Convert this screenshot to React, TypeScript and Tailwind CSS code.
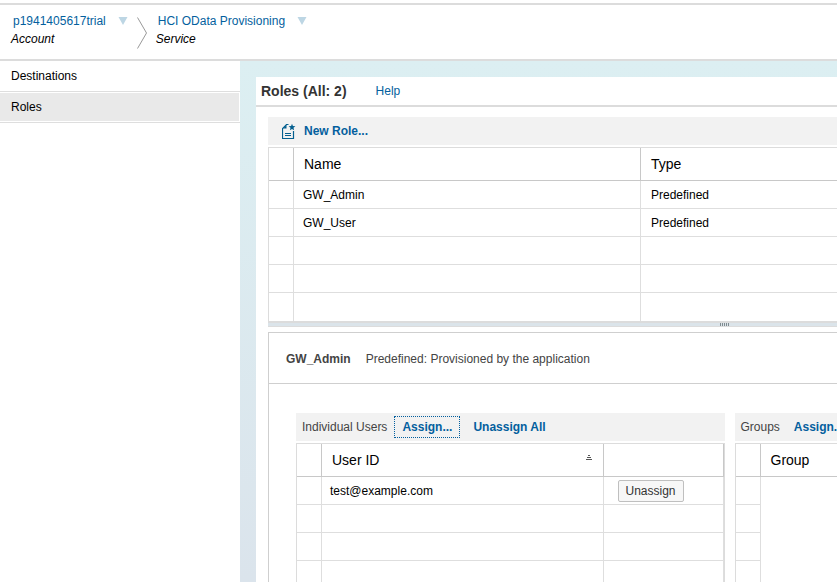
import React from "react";

const mainRoles = [
  { name: "GW_Admin", type: "Predefined" },
  { name: "GW_User", type: "Predefined" },
];

const blankRows = [0, 1, 2, 3, 4];

function DropArrow({ label }: { label: string }) {
  return (
    <button type="button" aria-label={label} className="block">
      <svg width="10" height="8" viewBox="0 0 10 8" fill="#bdd6e4">
        <path d="M0.5 0h9L5 8z" />
      </svg>
    </button>
  );
}

function Crumb({ title, kind }: { title: string; kind: string }) {
  return (
    <div>
      <div className="flex items-center gap-3 pl-0.5">
        <a href="#" className="text-[#045f9e]">{title}</a>
        <DropArrow label={`Switch ${kind}`} />
      </div>
      <div className="text-black italic">{kind}</div>
    </div>
  );
}

function NewRoleIcon() {
  return (
    <svg width="14" height="16" viewBox="0 0 14 16" fill="none" stroke="#045f8f">
      <path d="M6.500 1.500H4.500L0.500 5.500V15.500H11.500V8" strokeWidth="1.200" />
      <path d="M1 5.500L4.500 2V5.500Z" fill="#045f8f" stroke="none" />
      <path d="M3 10.500H9M3 12.500H9" />
      <path d="M10 0.800L10.900 3.100L13.400 3.200L11.500 4.800L12.100 7.200L10 5.900L7.900 7.200L8.500 4.800L6.600 3.200L9.100 3.100Z" fill="#045f8f" stroke="none" />
    </svg>
  );
}

function SortIcon() {
  return (
    <svg className="mt-[5px]" width="6" height="5" viewBox="0 0 6 5" fill="#555" aria-label="Sorted ascending">
      <path d="M2 0h2v1H2zM1 2h4v1H1zM0 4h6v1H0z" />
    </svg>
  );
}

const headCell = "h-[33px] border-b border-[#c8c8c8] text-left text-sm font-normal";
const bodyCell = "h-7 border-b border-[#dedede]";

export default function App() {
  return (
    <div className="flex h-screen flex-col overflow-hidden bg-white font-['Liberation_Sans',Arial,sans-serif] text-xs leading-[18px] text-black">
      <header className="mt-[3px] flex shrink-0 gap-2 border-y-2 border-[#dcdcdc] pt-[7px] pb-[9px] pl-[11px]">
        <Crumb title="p1941405617trial" kind="Account" />
        <svg className="mt-[5px]" width="12" height="33" viewBox="0 0 12 33" fill="none" stroke="#999">
          <path d="M1.500 0.500L10.500 16L1.500 31.500" />
        </svg>
        <Crumb title="HCI OData Provisioning" kind="Service" />
      </header>

      <div className="flex min-h-0 flex-1">
        <nav className="w-60 shrink-0">
          <a href="#" className="flex h-[31px] items-center border-b border-[#dedede] pl-[11px]">Destinations</a>
          <a href="#" className="block border-b border-[#dedede] py-px pr-px">
            <span className="flex h-[28px] items-center bg-[#e9e9e9] pl-[11px]">Roles</span>
          </a>
        </nav>

        <main className="min-w-0 flex-1 overflow-hidden bg-linear-to-b from-[#dceff2] to-[#dbe4ec] pt-4 pl-4">
          <div className="min-h-full min-w-[925px] bg-white">
            <div className="flex h-[30px] items-center gap-[29px] border-b-2 border-[#dcdcdc] pl-[5px]">
              <h1 className="text-sm font-bold text-[#333]">Roles (All: 2)</h1>
              <a href="#" className="text-[#045f9e]">Help</a>
            </div>

            <section className="mt-[10px] pl-3">
              <div className="flex h-7 items-center bg-[#f2f2f2] pl-[14px]">
                <button type="button" className="flex items-center gap-2 font-bold text-[#045f9e]">
                  <NewRoleIcon />
                  New Role...
                </button>
              </div>

              <table className="mt-0.5 w-full table-fixed border-separate border-spacing-0 border-t border-l border-[#dcdcdc]">
                <colgroup>
                  <col className="w-[25px]" />
                  <col className="w-[347px]" />
                  <col />
                </colgroup>
                <thead>
                  <tr>
                    <th className={`${headCell} border-r`} />
                    <th className={`${headCell} border-r pl-[10px]`}>Name</th>
                    <th className={`${headCell} pl-[10px]`}>Type</th>
                  </tr>
                </thead>
                <tbody>
                  {blankRows.map((i) => (
                    <tr key={i} className="last:*:border-b-0">
                      <td className={`${bodyCell} border-r`} />
                      <td className={`${bodyCell} border-r pl-[9px]`}>{mainRoles[i]?.name}</td>
                      <td className={`${bodyCell} pl-[10px]`}>{mainRoles[i]?.type}</td>
                    </tr>
                  ))}
                </tbody>
              </table>

              <div className="flex h-[6px] items-center justify-center gap-px border-t-2 border-b border-[#dcdcdc] bg-[#dbe4ea]">
                {blankRows.map((i) => (
                  <span key={i} className="h-[3px] w-px bg-[#7f8b90]" />
                ))}
              </div>

              <div className="mt-[5px] border-t border-l border-[#cfcfcf]">
                <div className="flex h-[51px] items-center gap-[15px] border-b border-[#cfcfcf] pt-px pl-[17px] text-[#444]">
                  <h2 className="font-bold">GW_Admin</h2>
                  <p>Predefined: Provisioned by the application</p>
                </div>

                <div className="grid grid-cols-2 gap-[10px] pt-[29px] pr-[18px] pl-[27px]">
                  <section>
                    <div className="flex h-7 items-center bg-[#f2f2f2] pl-[6px] text-[#444]">
                      <h3>Individual Users</h3>
                      <button type="button" className="ml-[7px] h-[22px] border border-dotted border-[#045f9e] px-[7px] font-bold text-[#045f9e]">Assign...</button>
                      <button type="button" className="ml-[13px] font-bold text-[#045f9e]">Unassign All</button>
                    </div>
                    <table className="mt-0.5 w-full table-fixed border-separate border-spacing-0 border-t border-r border-l border-[#dcdcdc]">
                      <colgroup>
                        <col className="w-[25px]" />
                        <col />
                        <col className="w-[120px]" />
                      </colgroup>
                      <thead>
                        <tr>
                          <th className={`${headCell} border-r`} />
                          <th className={`${headCell} border-r pr-[11px] pl-[10px]`}>
                            <span className="flex items-start justify-between">
                              User ID
                              <SortIcon />
                            </span>
                          </th>
                          <th className={`${headCell} border-r`} />
                        </tr>
                      </thead>
                      <tbody>
                        {blankRows.map((i) => (
                          <tr key={i}>
                            <td className={`${bodyCell} border-r`} />
                            <td className={`${bodyCell} border-r pl-2`}>{i === 0 ? "test@example.com" : null}</td>
                            <td className={`${bodyCell} border-r pl-[14px]`}>
                              {i === 0 ? (
                                <button type="button" className="block h-[22px] rounded-xs border border-[#bfbfbf] bg-[#f7f7f7] px-[7px] leading-5 text-[#333]">Unassign</button>
                              ) : null}
                            </td>
                          </tr>
                        ))}
                      </tbody>
                    </table>
                  </section>

                  <section>
                    <div className="flex h-7 items-center gap-[14px] bg-[#f2f2f2] pl-[6px] text-[#444]">
                      <h3>Groups</h3>
                      <button type="button" className="font-bold text-[#045f9e]">Assign...</button>
                    </div>
                    <table className="mt-0.5 w-full table-fixed border-separate border-spacing-0 border-t border-l border-[#dcdcdc]">
                      <colgroup>
                        <col className="w-[25px]" />
                        <col />
                      </colgroup>
                      <thead>
                        <tr>
                          <th className={`${headCell} border-r`} />
                          <th className={`${headCell} pl-[10px]`}>Group</th>
                        </tr>
                      </thead>
                      <tbody>
                        {blankRows.map((i) => (
                          <tr key={i}>
                            <td className={`${bodyCell} border-r`} />
                            <td />
                          </tr>
                        ))}
                      </tbody>
                    </table>
                  </section>
                </div>
              </div>
            </section>
          </div>
        </main>
      </div>
    </div>
  );
}
